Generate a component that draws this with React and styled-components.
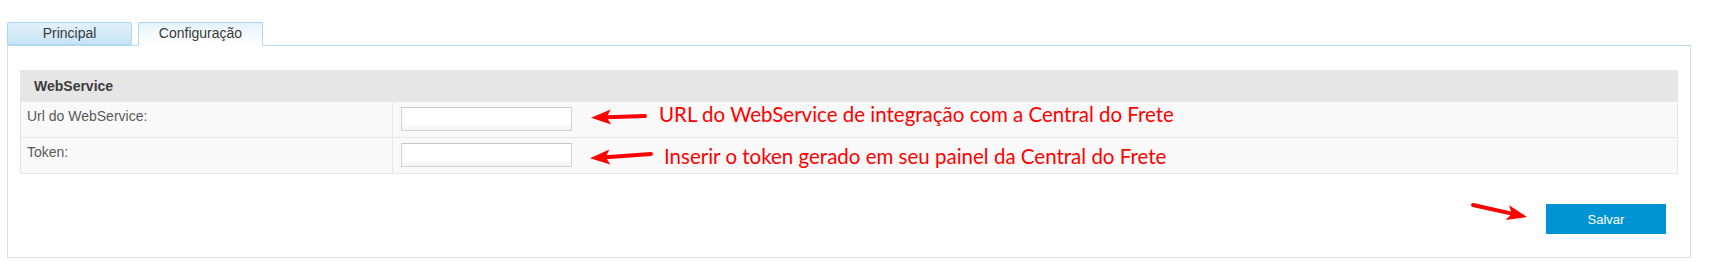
import React from "react";
import styled, { createGlobalStyle } from "styled-components";

const GlobalStyle = createGlobalStyle`
  html, body { margin: 0; padding: 0; background: #fff; }
  body { font-family: "Liberation Sans", Arial, sans-serif; color: #333; }
`;

const Page = styled.div`
  padding: 22px 18px 4px 7px;
`;

const TabBar = styled.div`
  display: flex;
  align-items: flex-start;
  gap: 6px;
  height: 23px;
  position: relative;
  z-index: 1;
`;

const Tab = styled.div`
  box-sizing: border-box;
  width: 125px;
  height: ${(p) => (p.$active ? "24px" : "23px")};
  border: 1px solid #aad6ef;
  border-bottom: ${(p) => (p.$active ? "1px solid #fff" : "1px solid #aad6ef")};
  border-radius: 2px 2px 0 0;
  background: ${(p) =>
    p.$active
      ? "linear-gradient(to bottom, #e4f2fb 0%, #f6fbfe 60%, #ffffff 100%)"
      : "linear-gradient(to bottom, #e2f1fb 0%, #d2eaf8 60%, #c6e4f6 100%)"};
  font-size: 14px;
  line-height: 20px;
  color: #3a3a3a;
  text-align: center;
  cursor: pointer;
`;

const Panel = styled.div`
  border: 1px solid #dedede;
  border-top: 1px solid #b4dcf1;
  padding: 24px 12px 23px 12px;
`;

const Table = styled.div`
  border: 1px solid #e6e6e6;
  border-top: none;
`;

const HeaderRow = styled.div`
  height: 31px;
  background: #e6e6e6;
  display: flex;
  align-items: center;
  padding-left: 13px;
  font-size: 14px;
  font-weight: bold;
  color: #3c3c3c;
`;

const Row = styled.div`
  display: grid;
  grid-template-columns: 372px 1fr;
  height: 36px;
  box-sizing: border-box;
  background: #f9f9f9;
  border-top: 1px solid #e8e8e8;
`;

const LabelCell = styled.div`
  padding: 6px 0 0 6px;
  font-size: 14px;
  line-height: 16px;
  color: #5a5a5a;
  border-right: 1px solid #e8e8e8;
`;

const ValueCell = styled.div`
  display: flex;
  align-items: flex-start;
  padding: ${(p) => p.$top}px 0 0 8px;
`;

const TextInput = styled.input`
  box-sizing: border-box;
  width: 171px;
  height: 24px;
  margin: 0;
  border: 1px solid #d3d3d3;
  border-top-color: #c8c8c8;
  background: linear-gradient(to bottom, #ffffff 0%, #ffffff 70%, #f3f3f3 100%);
  outline: none;
`;

const Note = styled.span`
  font-family: Lato, "Open Sans", sans-serif;
  font-size: 20.5px;
  line-height: 20px;
  color: #ff0000;
  white-space: nowrap;
  margin-top: ${(p) => p.$shift}px;
  margin-left: ${(p) => p.$gap}px;
`;

const ArrowSvg = styled.svg`
  display: block;
  flex: none;
  margin-left: ${(p) => p.$ml || 0}px;
  margin-right: ${(p) => p.$mr || 0}px;
  margin-top: ${(p) => p.$mt || 0}px;
`;

const Actions = styled.div`
  display: flex;
  justify-content: flex-end;
  align-items: flex-start;
  margin-top: 30px;
  padding-right: 12px;
`;

const SaveButton = styled.button`
  width: 120px;
  height: 30px;
  border: none;
  background: #0094d4;
  color: #fff;
  font-family: "Liberation Sans", Arial, sans-serif;
  font-size: 13px;
  cursor: pointer;
`;

function PointerArrow({ w, h, tail, tip, ml, mr, mt }) {
  const dx = tip[0] - tail[0];
  const dy = tip[1] - tail[1];
  const len = Math.hypot(dx, dy);
  const ux = dx / len;
  const uy = dy / len;
  const nx = -uy;
  const ny = ux;
  const L = 20;
  const W = 7.5;
  const bx = tip[0] - ux * L;
  const by = tip[1] - uy * L;
  const nkx = tip[0] - ux * L * 0.78;
  const nky = tip[1] - uy * L * 0.78;
  const pts = [
    [tip[0], tip[1]],
    [bx + nx * W, by + ny * W],
    [nkx, nky],
    [bx - nx * W, by - ny * W],
  ]
    .map((p) => p.join(","))
    .join(" ");
  return (
    <ArrowSvg width={w} height={h} viewBox={`0 0 ${w} ${h}`} $ml={ml} $mr={mr} $mt={mt}>
      <line
        x1={tail[0]}
        y1={tail[1]}
        x2={nkx}
        y2={nky}
        stroke="#ff0000"
        strokeWidth="4"
        strokeLinecap="round"
      />
      <polygon points={pts} fill="#ff0000" />
    </ArrowSvg>
  );
}

const rows = [
  {
    label: "Url do WebService:",
    note: "URL do WebService de integração com a Central do Frete",
    top: 5,
    arrow: { w: 58, h: 24, tail: [55, 9], tip: [1, 10.7], ml: 18 },
    gap: 11,
    shift: -3,
  },
  {
    label: "Token:",
    note: "Inserir o token gerado em seu painel da Central do Frete",
    top: 5,
    arrow: { w: 65, h: 24, tail: [62, 11], tip: [1, 15.3], ml: 17 },
    gap: 10,
    shift: 3,
  },
];

export default function App() {
  return (
    <>
      <GlobalStyle />
      <Page>
        <TabBar>
          <Tab>Principal</Tab>
          <Tab $active>Configuração</Tab>
        </TabBar>
        <Panel>
          <Table>
            <HeaderRow>WebService</HeaderRow>
            {rows.map((r) => (
              <Row key={r.label}>
                <LabelCell>{r.label}</LabelCell>
                <ValueCell $top={r.top}>
                  <TextInput type="text" />
                  <PointerArrow {...r.arrow} />
                  <Note $gap={r.gap} $shift={r.shift}>
                    {r.note}
                  </Note>
                </ValueCell>
              </Row>
            ))}
          </Table>
          <Actions>
            <PointerArrow w={60} h={30} tail={[3, 6]} tip={[57, 18]} mr={16} mt={-5} />
            <SaveButton type="button">Salvar</SaveButton>
          </Actions>
        </Panel>
      </Page>
    </>
  );
}
